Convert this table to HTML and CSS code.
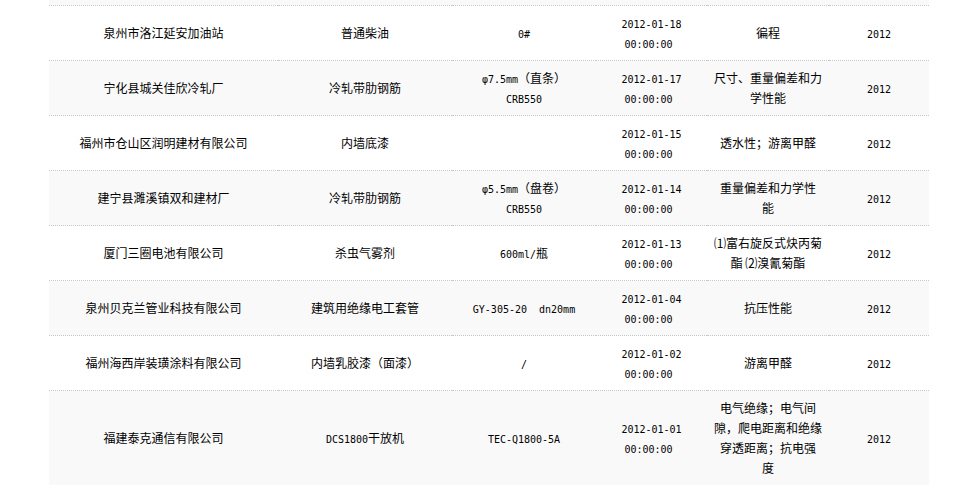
FILE: index.html
```html
<!DOCTYPE html>
<html lang="zh-CN">
<head>
<meta charset="utf-8">
<title>抽检结果</title>
<link rel="stylesheet" href="styles.css">
</head>
<body>
<div class="wrap">
  <div class="prev"></div>
  <table class="list">
    <colgroup>
      <col class="c1"><col class="c2"><col class="c3"><col class="c4"><col class="c5"><col class="c6">
    </colgroup>
    <tbody>
      <tr>
        <td>泉州市洛江延安加油站</td>
        <td>普通柴油</td>
        <td><span class="en">0#</span></td>
        <td><span class="en">2012-01-18<br>00:00:00&nbsp;</span></td>
        <td>徧程</td>
        <td><span class="en">2012</span></td>
      </tr>
      <tr>
        <td>宁化县城关佳欣冷轧厂</td>
        <td>冷轧带肋钢筋</td>
        <td><span class="en">φ7.5mm</span>（直条）<br><span class="en">CRB550</span></td>
        <td><span class="en">2012-01-17<br>00:00:00&nbsp;</span></td>
        <td>尺寸、重量偏差和力<br>学性能</td>
        <td><span class="en">2012</span></td>
      </tr>
      <tr>
        <td>福州市仓山区润明建材有限公司</td>
        <td>内墙底漆</td>
        <td></td>
        <td><span class="en">2012-01-15<br>00:00:00&nbsp;</span></td>
        <td>透水性；游离甲醛</td>
        <td><span class="en">2012</span></td>
      </tr>
      <tr>
        <td>建宁县濉溪镇双和建材厂</td>
        <td>冷轧带肋钢筋</td>
        <td><span class="en">φ5.5mm</span>（盘卷）<br><span class="en">CRB550</span></td>
        <td><span class="en">2012-01-14<br>00:00:00&nbsp;</span></td>
        <td>重量偏差和力学性<br>能</td>
        <td><span class="en">2012</span></td>
      </tr>
      <tr>
        <td>厦门三圈电池有限公司</td>
        <td>杀虫气雾剂</td>
        <td><span class="en">600ml/</span>瓶</td>
        <td><span class="en">2012-01-13<br>00:00:00&nbsp;</span></td>
        <td>⑴富右旋反式炔丙菊<br>酯 ⑵溴氰菊酯</td>
        <td><span class="en">2012</span></td>
      </tr>
      <tr>
        <td>泉州贝克兰管业科技有限公司</td>
        <td>建筑用绝缘电工套管</td>
        <td><span class="en">GY-305-20&nbsp;&nbsp;dn20mm</span></td>
        <td><span class="en">2012-01-04<br>00:00:00&nbsp;</span></td>
        <td>抗压性能</td>
        <td><span class="en">2012</span></td>
      </tr>
      <tr>
        <td>福州海西岸装璜涂料有限公司</td>
        <td>内墙乳胶漆（面漆）</td>
        <td><span class="en">/</span></td>
        <td><span class="en">2012-01-02<br>00:00:00&nbsp;</span></td>
        <td>游离甲醛</td>
        <td><span class="en">2012</span></td>
      </tr>
      <tr>
        <td>福建泰克通信有限公司</td>
        <td><span class="en">DCS1800</span>干放机</td>
        <td><span class="en">TEC-Q1800-5A</span></td>
        <td><span class="en">2012-01-01<br>00:00:00&nbsp;</span></td>
        <td>电气绝缘；电气间<br>隙，爬电距离和绝缘<br>穿透距离；抗电强<br>度</td>
        <td><span class="en">2012</span></td>
      </tr>
    </tbody>
  </table>
</div>
</body>
</html>
```
FILE: styles.css
```css
html, body {
  margin: 0;
  padding: 0;
  background: #fff;
}
body {
  font-family: "Noto Sans CJK SC", "Noto Sans", sans-serif;
  font-size: 12px;
  color: #000;
  overflow: hidden;
}
.wrap {
  width: 880px;
  margin-left: 49px;
}
.prev {
  height: 5px;
  background: #f9f9f9;
}
.list {
  width: 880px;
  table-layout: fixed;
  border-collapse: collapse;
  border-spacing: 0;
}
.c1 { width: 229px; }
.c2 { width: 174px; }
.c3 { width: 144px; }
.c4 { width: 111px; }
.c5 { width: 122px; }
.c6 { width: 100px; }
.list tr {
  border-top: 1px dotted #c8c8c8;
}
.list tr:nth-child(even) {
  background: #f9f9f9;
}
.list td {
  height: 40px;
  padding: 7px 4px;
  line-height: 20px;
  text-align: center;
  vertical-align: middle;
  white-space: nowrap;
}
.en {
  font-family: "DejaVu Sans Mono", "Liberation Mono", monospace;
  font-size: 10px;
  line-height: 12px;
}
```
